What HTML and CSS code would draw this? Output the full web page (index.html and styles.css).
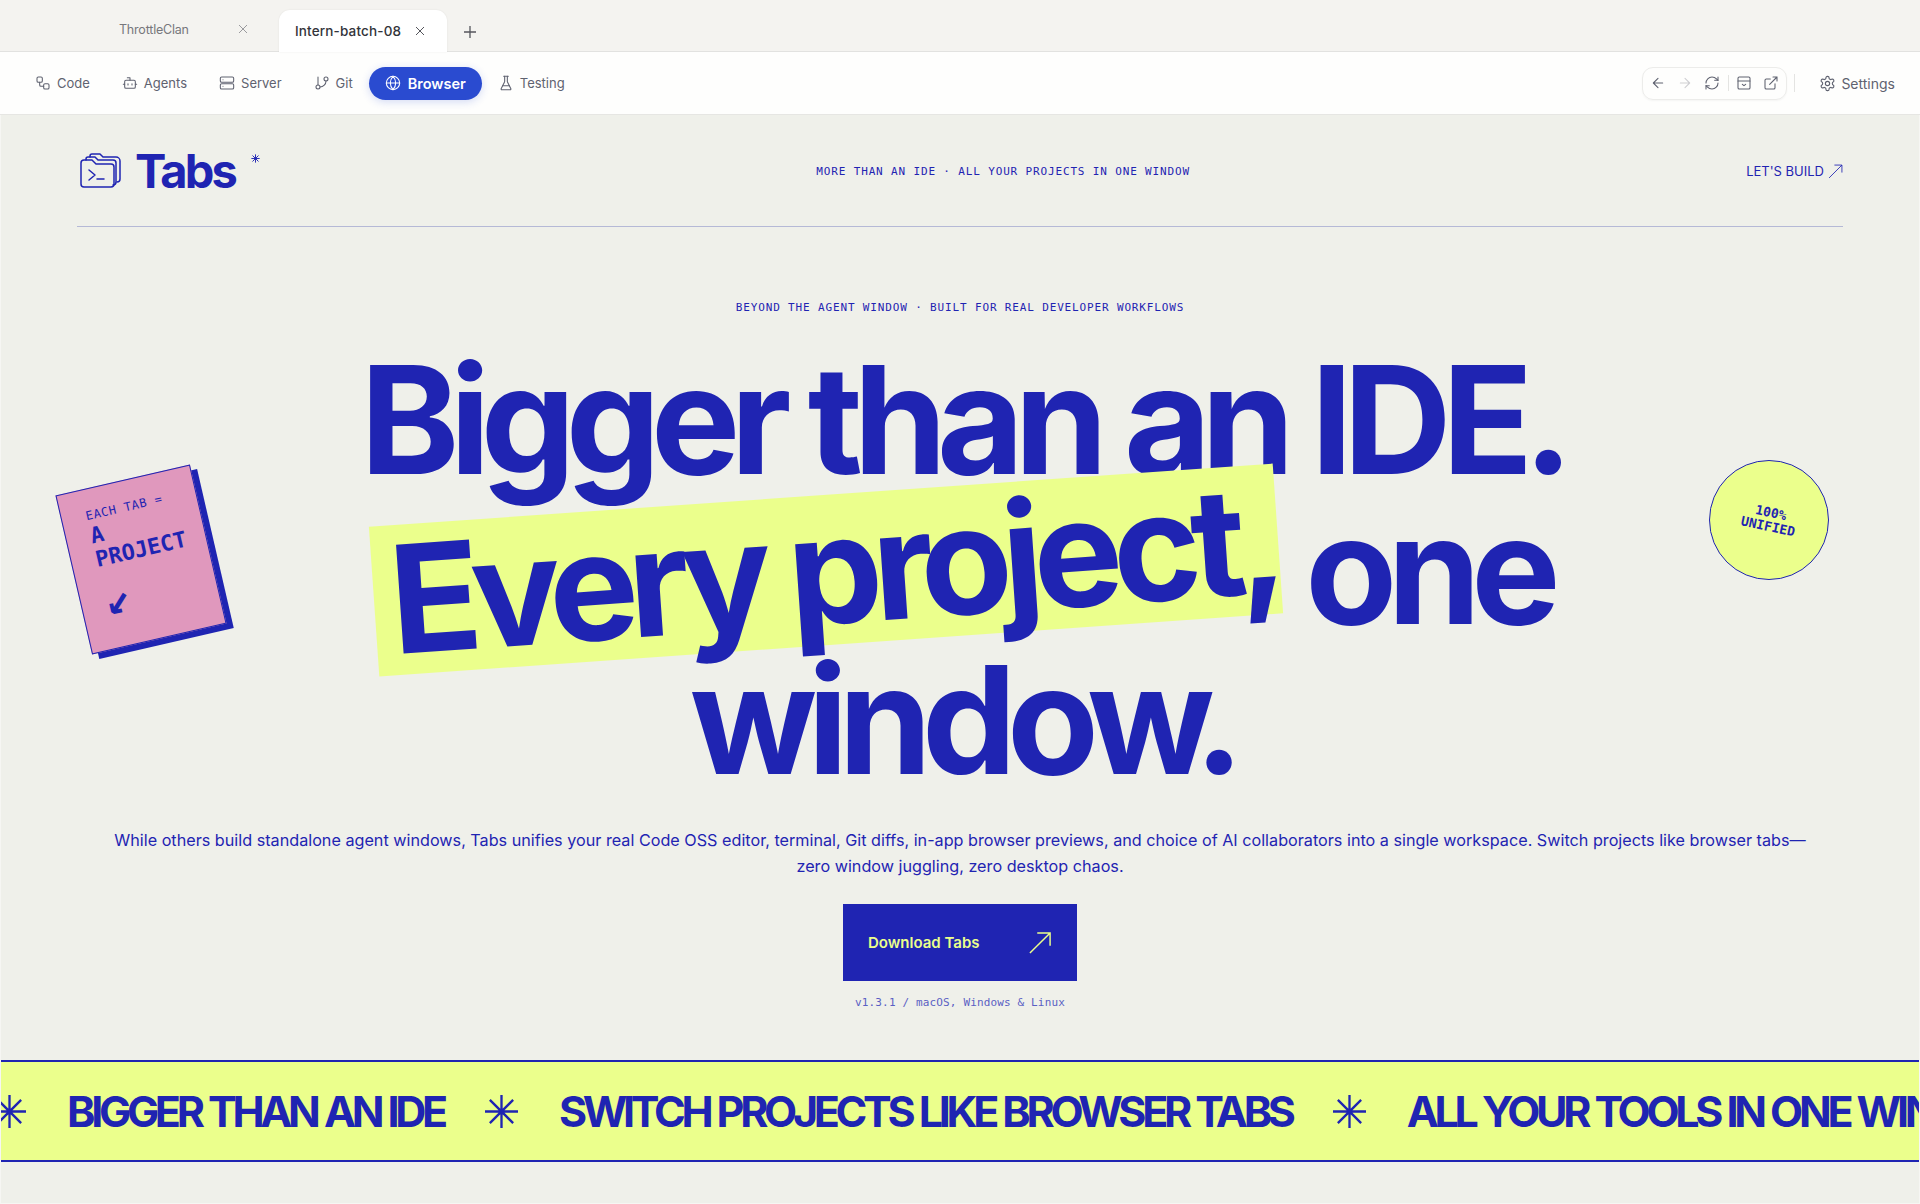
FILE: index.html
```html
<!DOCTYPE html>
<html lang="en">
<head>
  <meta charset="UTF-8" />
  <title>Tabs</title>
  <link rel="stylesheet" href="styles.css">
</head>
<body>
  <!-- Window tabs -->
  <div class="tabbar">
    <div class="tab">
      <span>ThrottleClan</span>
      <svg class="tab-close" viewBox="0 0 12 12"><path d="M2 2l8 8M10 2l-8 8"/></svg>
    </div>
    <div class="tab tab-active">
      <span>Intern-batch-08</span>
      <svg class="tab-close" viewBox="0 0 12 12"><path d="M2 2l8 8M10 2l-8 8"/></svg>
    </div>
    <svg class="tab-add" viewBox="0 0 14 14"><path d="M7 1v12M1 7h12"/></svg>
  </div>

  <!-- App toolbar -->
  <div class="toolbar">
    <nav class="nav">
      <a class="nav-item"><svg class="icon" viewBox="0 0 24 24"><rect x="3" y="3" width="8" height="8" rx="2"/><path d="M7 11v4a2 2 0 0 0 2 2h4"/><rect x="13" y="13" width="8" height="8" rx="2"/></svg>Code</a>
      <a class="nav-item"><svg class="icon" viewBox="0 0 24 24"><path d="M12 8V4H8"/><rect x="4" y="8" width="16" height="12" rx="2"/><path d="M2 14h2M20 14h2M15 13v2M9 13v2"/></svg>Agents</a>
      <a class="nav-item"><svg class="icon" viewBox="0 0 24 24"><rect x="2" y="3" width="20" height="8" rx="2"/><rect x="2" y="13" width="20" height="8" rx="2"/><path d="M6 7h.01M6 17h.01"/></svg>Server</a>
      <a class="nav-item"><svg class="icon" viewBox="0 0 24 24"><path d="M6 3v12"/><circle cx="18" cy="6" r="3"/><circle cx="6" cy="18" r="3"/><path d="M18 9a9 9 0 0 1-9 9"/></svg>Git</a>
      <a class="nav-item nav-active"><svg class="icon" viewBox="0 0 24 24"><circle cx="12" cy="12" r="10"/><path d="M12 2a14.5 14.5 0 0 0 0 20 14.5 14.5 0 0 0 0-20M2 12h20"/></svg>Browser</a>
      <a class="nav-item"><svg class="icon" viewBox="0 0 24 24"><path d="M10 2v7.527a2 2 0 0 1-.211.896L4.72 20.55a1 1 0 0 0 .9 1.45h12.76a1 1 0 0 0 .9-1.45l-5.069-10.127A2 2 0 0 1 14 9.527V2"/><path d="M8.5 2h7M7 16h10"/></svg>Testing</a>
    </nav>
    <div class="toolbar-right">
      <div class="browser-btns">
        <svg class="icon" viewBox="0 0 24 24"><path d="M12 19l-7-7 7-7M19 12H5"/></svg>
        <svg class="icon icon-off" viewBox="0 0 24 24"><path d="M5 12h14M12 5l7 7-7 7"/></svg>
        <svg class="icon" viewBox="0 0 24 24"><path d="M3 12a9 9 0 0 1 9-9 9.75 9.75 0 0 1 6.74 2.74L21 8"/><path d="M21 3v5h-5"/><path d="M21 12a9 9 0 0 1-9 9 9.75 9.75 0 0 1-6.74-2.74L3 16"/><path d="M8 16H3v5"/></svg>
        <span class="btn-sep"></span>
        <svg class="icon" viewBox="0 0 24 24"><rect x="3" y="3" width="18" height="18" rx="2"/><path d="M3 9h18M9.5 14l2.5 2 2.5-2"/></svg>
        <svg class="icon" viewBox="0 0 24 24"><path d="M15 3h6v6M10 14L21 3M18 13v6a2 2 0 0 1-2 2H5a2 2 0 0 1-2-2V8a2 2 0 0 1 2-2h6"/></svg>
      </div>
      <span class="toolbar-sep"></span>
      <a class="settings"><svg class="icon icon-gear" viewBox="0 0 24 24"><path d="M12.22 2h-.44a2 2 0 0 0-2 2v.18a2 2 0 0 1-1 1.73l-.43.25a2 2 0 0 1-2 0l-.15-.08a2 2 0 0 0-2.73.73l-.22.38a2 2 0 0 0 .73 2.73l.15.1a2 2 0 0 1 1 1.72v.51a2 2 0 0 1-1 1.74l-.15.09a2 2 0 0 0-.73 2.73l.22.38a2 2 0 0 0 2.73.73l.15-.08a2 2 0 0 1 2 0l.43.25a2 2 0 0 1 1 1.73V20a2 2 0 0 0 2 2h.44a2 2 0 0 0 2-2v-.18a2 2 0 0 1 1-1.73l.43-.25a2 2 0 0 1 2 0l.15.08a2 2 0 0 0 2.73-.73l.22-.39a2 2 0 0 0-.73-2.73l-.15-.08a2 2 0 0 1-1-1.74v-.5a2 2 0 0 1 1-1.74l.15-.09a2 2 0 0 0 .73-2.73l-.22-.38a2 2 0 0 0-2.73-.73l-.15.08a2 2 0 0 1-2 0l-.43-.25a2 2 0 0 1-1-1.73V4a2 2 0 0 0-2-2z"/><circle cx="12" cy="12" r="3"/></svg>Settings</a>
    </div>
  </div>

  <!-- Landing page in the browser pane -->
  <main class="page">
    <header class="site-header">
      <div class="logo">
        <svg class="logo-icon" viewBox="0 0 42 36">
          <path d="M2 32V11a3 3 0 0 1 3-3h8l4 4h15a3 3 0 0 1 3 3v17a3 3 0 0 1-3 3H5a3 3 0 0 1-3-3z"/>
          <path d="M7 8V7a2 2 0 0 1 2-2h7l3 3h15a3 3 0 0 1 3 3v19a3 3 0 0 1-3 3"/>
          <path d="M11 5V4a2 2 0 0 1 2-2h8l3 3h13a4 4 0 0 1 4 4v18a3 3 0 0 1-3 3"/>
          <path d="M10 18l6 5-6 5M18 27h7"/>
        </svg>
        <span class="logo-text">Tabs</span>
        <svg class="logo-star" viewBox="0 0 24 24"><path d="M12 1v22M1 12h22M4 4l16 16M20 4L4 20"/></svg>
      </div>
      <span class="mono-label">MORE THAN AN IDE · ALL YOUR PROJECTS IN ONE WINDOW</span>
      <a class="build-link">LET'S BUILD
        <svg class="build-arrow" viewBox="0 0 14 14"><path d="M1 13L13 1M6 1h7v7"/></svg>
      </a>
    </header>

    <section class="hero">
      <p class="mono-label">BEYOND THE AGENT WINDOW · BUILT FOR REAL DEVELOPER WORKFLOWS</p>
      <h1 class="headline">Bigger than an IDE.<br><span class="highlight">Every project,</span> one<br>window.</h1>
      <p class="lead">While others build standalone agent windows, Tabs unifies your real Code OSS editor, terminal, Git diffs, in-app browser previews, and choice of AI collaborators into a single workspace. Switch projects like browser tabs—zero window juggling, zero desktop chaos.</p>
      <a class="download">
        <span>Download Tabs</span>
        <svg class="download-arrow" viewBox="0 0 24 24"><path d="M1 23L23 1M9 1h14v14"/></svg>
      </a>
      <p class="version">v1.3.1 / macOS, Windows &amp; Linux</p>

      <div class="sticker">
        <p class="sticker-small">EACH TAB =</p>
        <p class="sticker-big">A PROJECT</p>
        <p class="sticker-arrow">↙</p>
      </div>
      <div class="badge"><span>100%<br>UNIFIED</span></div>
    </section>

    <div class="marquee">
      <svg class="star" viewBox="0 0 34 34"><path d="M17 0v34M0 17h34M5 5l24 24M29 5L5 29"/></svg>
      <span>BIGGER THAN AN IDE</span>
      <svg class="star" viewBox="0 0 34 34"><path d="M17 0v34M0 17h34M5 5l24 24M29 5L5 29"/></svg>
      <span>SWITCH PROJECTS LIKE BROWSER TABS</span>
      <svg class="star" viewBox="0 0 34 34"><path d="M17 0v34M0 17h34M5 5l24 24M29 5L5 29"/></svg>
      <span>ALL YOUR TOOLS IN ONE WINDOW</span>
    </div>
  </main>
</body>
</html>
```

FILE: styles.css
```css
:root {
  --blue: #1f24b2;
  --lime: #ebff8c;
  --paper: #eff0ea;
  --grey: #5f6270;
  --mono: "DejaVu Sans Mono", monospace;
}

* {
  box-sizing: border-box;
}

html, body {
  height: 100%;
}

body {
  margin: 0;
  font-family: Inter, sans-serif;
  background: var(--paper);
  color: var(--blue);
  overflow: hidden;
}

p {
  margin: 0;
}

.icon {
  width: 16px;
  height: 16px;
  flex: none;
  fill: none;
  stroke: currentColor;
  stroke-width: 1.6;
  stroke-linecap: round;
  stroke-linejoin: round;
}

/* Tabs */
.tabbar {
  height: 52px;
  display: flex;
  align-items: flex-end;
  padding-left: 103px;
  background: #f4f3f0;
  border-bottom: 1px solid #e2e2e0;
}

.tab {
  width: 176px;
  height: 41px;
  display: flex;
  align-items: center;
  justify-content: space-between;
  padding: 0 30px 3px 16px;
  font-size: 12.5px;
  letter-spacing: -0.2px;
  color: #77777c;
}

.tab-active {
  width: 168px;
  height: 42px;
  margin-bottom: -1px;
  padding: 0 21px 0 16px;
  background: #fff;
  border-radius: 11px 11px 0 0;
  color: #33343a;
  font-size: 13.5px;
  letter-spacing: 0.15px;
  font-weight: 500;
  box-shadow: 0 0 2px rgba(0, 0, 0, 0.08);
}

.tab-close {
  width: 12px;
  height: 12px;
  fill: none;
  stroke: #9a9a9e;
  stroke-width: 1;
}

.tab-active .tab-close {
  stroke: #55565c;
}

.tab-add {
  width: 14px;
  height: 14px;
  margin: 0 0 12px 16px;
  fill: none;
  stroke: #55565c;
  stroke-width: 1.3;
}

/* Toolbar */
.toolbar {
  height: 63px;
  display: flex;
  align-items: center;
  justify-content: space-between;
  padding: 0 25px 0 19px;
  background: #fefefd;
  border-bottom: 1px solid #e6e6e3;
}

.nav {
  display: flex;
  align-items: center;
}

.nav-item {
  height: 33px;
  display: flex;
  align-items: center;
  gap: 6px;
  padding: 0 16px;
  font-size: 13px;
  color: var(--grey);
}

.nav-active {
  gap: 7px;
  background: #2a4bd0;
  border-radius: 17px;
  color: #fff;
  font-size: 14.5px;
  font-weight: 600;
  box-shadow: 0 2px 8px rgba(42, 75, 208, 0.2);
}

.toolbar-right {
  display: flex;
  align-items: center;
}

.browser-btns {
  width: 145px;
  height: 33px;
  margin-left: 2px;
  display: flex;
  align-items: center;
  gap: 11px;
  padding: 0 7px;
  border: 1px solid #ececea;
  border-radius: 11px;
  color: var(--grey);
  box-shadow: 0 1px 2px rgba(0, 0, 0, 0.04);
}

.icon-off {
  color: #cfcfd2;
}

.btn-sep {
  width: 1px;
  height: 16px;
  margin: 0 -3.5px;
  background: #e4e4e2;
}

.toolbar-sep {
  width: 1px;
  height: 18px;
  margin: 0 24px 0 7px;
  background: #e4e4e2;
}

.settings {
  display: flex;
  align-items: center;
  gap: 5px;
  font-size: 14px;
  color: var(--grey);
}

.icon-gear {
  width: 17px;
  height: 17px;
}

/* Page */
.page {
  position: relative;
  height: 1089px;
  overflow: hidden;
}

.page::after {
  content: '';
  position: absolute;
  inset: 0;
  border: 1px solid #f6f6f3;
  border-top: none;
  pointer-events: none;
}

.site-header {
  height: 112px;
  margin: 0 77px;
  padding-top: 1px;
  display: flex;
  align-items: center;
  justify-content: space-between;
  border-bottom: 1px solid #b5b9d6;
}

.logo {
  display: flex;
  align-items: flex-start;
}

.logo-icon {
  width: 42px;
  height: 36px;
  margin: 7px 14px 0 2px;
  fill: none;
  stroke: var(--blue);
  stroke-width: 1.5;
  stroke-linejoin: round;
  stroke-linecap: round;
}

.logo-text {
  font-size: 47px;
  line-height: 52px;
  font-weight: 700;
  letter-spacing: -2.75px;
}

.logo-star {
  width: 9px;
  height: 9px;
  margin: 9px 0 0 16px;
  fill: none;
  stroke: var(--blue);
  stroke-width: 2.5;
}

.mono-label {
  font-family: var(--mono);
  font-size: 11px;
  letter-spacing: 0.85px;
}

.build-link {
  display: flex;
  align-items: center;
  gap: 4px;
  font-size: 13px;
}

.build-arrow {
  width: 15px;
  height: 15px;
  fill: none;
  stroke: var(--blue);
  stroke-width: 0.8;
}

.hero {
  position: relative;
  height: 833px;
  padding-top: 74px;
  text-align: center;
}

.headline {
  margin: 31px 0 0 4px;
  font-size: 150px;
  line-height: 150px;
  font-weight: 700;
  letter-spacing: -9.7px;
}

.highlight {
  display: inline-block;
  padding: 0 2px 0 16px;
  background: var(--lime);
  transform: rotate(-4deg);
}

.lead {
  width: 1710px;
  margin: 32px auto 0;
  font-size: 16.2px;
  line-height: 26px;
}

.download {
  width: 234px;
  height: 77px;
  margin: 25px auto 0;
  display: flex;
  align-items: center;
  justify-content: space-between;
  padding: 0 26px 0 25px;
  background: var(--blue);
  color: var(--lime);
  font-size: 15px;
  font-weight: 600;
}

.download-arrow {
  width: 22px;
  height: 22px;
  fill: none;
  stroke: var(--lime);
  stroke-width: 1.6;
}

.version {
  margin-top: 15px;
  font-family: var(--mono);
  font-size: 11px;
  letter-spacing: 0.15px;
  color: #5a5fc4;
}

/* Sticker and badge sit over the hero */
.sticker {
  position: absolute;
  left: 72px;
  top: 251px;
  width: 138px;
  height: 163px;
  padding: 19px 12px 0 24px;
  background: #e098bd;
  border: 1px solid var(--blue);
  box-shadow: 6px 6px 0 var(--blue);
  transform: rotate(-13deg);
  text-align: left;
  font-family: var(--mono);
}

.sticker-small {
  font-size: 12px;
  letter-spacing: 0.6px;
  margin-bottom: 2px;
}

.sticker-big {
  font-size: 22px;
  line-height: 24px;
  font-weight: 700;
}

.sticker-arrow {
  margin-top: 12px;
  font-size: 42px;
  line-height: 36px;
  font-weight: 700;
}

.badge {
  position: absolute;
  left: 1709px;
  top: 233px;
  width: 120px;
  height: 120px;
  display: flex;
  align-items: center;
  justify-content: center;
  background: var(--lime);
  border: 1px solid var(--blue);
  border-radius: 50%;
  font-family: var(--mono);
  font-size: 13px;
  line-height: 14px;
  font-weight: 700;
}

.badge span {
  transform: rotate(12deg);
}

/* Marquee */
.marquee {
  height: 102px;
  display: flex;
  align-items: center;
  gap: 41px;
  margin-left: -7px;
  width: 2100px;
  background: var(--lime);
  border-top: 2px solid var(--blue);
  border-bottom: 2px solid var(--blue);
  font-size: 43px;
  font-weight: 700;
  letter-spacing: -4.3px;
  word-spacing: 1.5px;
  white-space: nowrap;
}

.star {
  width: 33px;
  height: 33px;
  flex: none;
  fill: none;
  stroke: var(--blue);
  stroke-width: 2.4;
}
```
